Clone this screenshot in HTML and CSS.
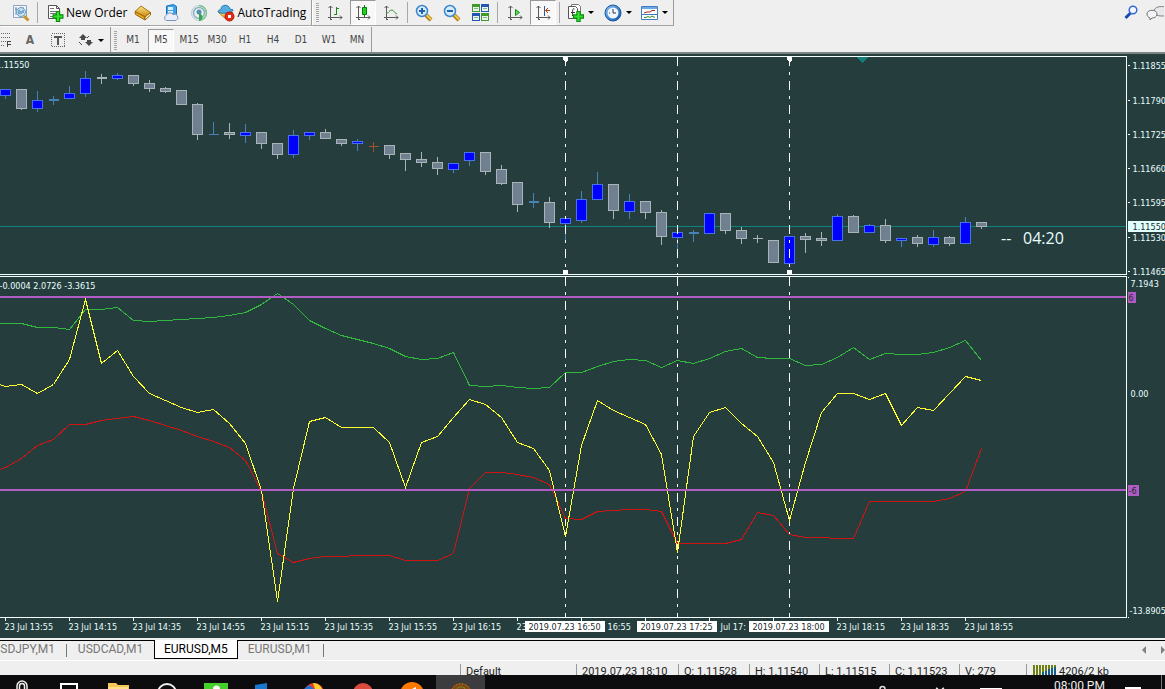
FILE: index.html
```html
<!DOCTYPE html>
<html lang="en">
<head>
<meta charset="utf-8">
<title>EURUSD,M5</title>
<link rel="stylesheet" href="styles.css">
</head>
<body>
<svg class="defs" aria-hidden="true">
  <defs>
    <linearGradient id="gold" x1="0" y1="0" x2="0" y2="1"><stop offset="0" stop-color="#ffe58a"/><stop offset="1" stop-color="#c88408"/></linearGradient>
    <linearGradient id="blue" x1="0" y1="0" x2="1" y2="1"><stop offset="0" stop-color="#8cc4f4"/><stop offset="1" stop-color="#0a50a8"/></linearGradient>
    <symbol id="plus" viewBox="0 0 10 10"><path d="M3.5.5h3v3h3v3h-3v3h-3v-3h-3v-3h3z" fill="#2fe32f" stroke="#0a8a0a"/></symbol>
    <symbol id="axes" viewBox="0 0 16 16"><path d="M3.500 1v14M1 12.500h14M1.500 3l2-2 2 2M13 10.500l2 2-2 2M3 14.500h2" fill="none" stroke="#5a5a5a"/></symbol>
    <symbol id="lens" viewBox="0 0 18 18"><path d="M11 11l5 5" stroke="#a87a10" stroke-width="4"/><path d="M11 10.500l5 5" stroke="#f0c850" stroke-width="2"/><circle cx="7" cy="7" r="5.500" fill="#d4ecff" stroke="#3a86cc" stroke-width="1.500"/></symbol>
  </defs>
</svg>

<header class="toolbars">
  <div class="bar bar-main">
    <div class="tools tools-order">
      <button class="tool" aria-label="Strategy tester"><svg width="18" height="18"><path d="M1.500 1.500h13v12h-13z" fill="#f4f8fc" stroke="#8fa4ba"/><path d="M4 3v8M3 5h2M7 4v7M11 3v6" stroke="#5b8dbd"/><circle cx="9" cy="8" r="4.500" fill="#b9dcf3" fill-opacity=".8" stroke="#6f9cc4"/><path d="M7 6v4M9 7v3M11 6v3" stroke="#4076a8"/><path d="M12 12l4.500 4.500" stroke="#c9942a" stroke-width="3"/></svg></button>
      <i class="sep"></i>
      <button class="tool tool-text tool-order"><svg width="17" height="18"><path d="M1.500 1.500h8l3 3v10h-11z" fill="#fff" stroke="#555"/><path d="M9.500 1.500v3h3" fill="none" stroke="#555"/><path d="M3 4.500h4M3 7.500h6M3 9.500h6M3 12.500h5" stroke="#777"/><use href="#plus" x="5" y="7" width="12" height="11"/></svg>New Order</button>
      <button class="tool" aria-label="MetaEditor"><svg width="18" height="16"><path d="M7 1l9.500 6.500-5.500 4.500L1 6.500z" fill="url(#gold)" stroke="#a87414"/><path d="M1 6.500L11 12v3L1.500 9.500z" fill="#e8a820" stroke="#9a6408"/><path d="M11 12l5.500-4.500v2.500L11 15z" fill="#fff1c0" stroke="#9a6408"/></svg></button>
      <button class="tool" aria-label="Market"><svg width="18" height="18"><path d="M4.500 2l7-1.500 3 2v8h-10z" fill="#3fa2ea" stroke="#1672bd"/><path d="M6 3h5v3H6zM6 7h5v2H6z" fill="#d8f0ff"/><path d="M4 16.500a3 3 0 0 1 0-5 4 4 0 0 1 7-1 3 3 0 0 1 3 6z" fill="#e6edf8" stroke="#7f93b8"/></svg></button>
      <button class="tool" aria-label="Signals"><svg width="18" height="18" fill="none"><circle cx="9" cy="9" r="7.500" stroke="#b9cdd6"/><circle cx="9" cy="9" r="5.500" stroke="#8ab0c4" stroke-width="1.500"/><path d="M9 1.500a7.500 7.500 0 0 1 0 15" stroke="#7cc48a" stroke-width="1.500"/><circle cx="9" cy="8" r="2.500" fill="#4a8fb4"/><path d="M9 17V9l3 2a4 4 0 0 1-3 6z" fill="#3aa64a"/></svg></button>
      <button class="tool tool-text"><svg width="18" height="18"><path d="M1 8h15l-6 8z" fill="url(#gold)" stroke="#b98513"/><path d="M1 7c0-1 3-1 3-2 0-5 8-5 9 0 1 1 3 0 3 1 0 3-15 5-15 1z" fill="#55aee0" stroke="#2578ac"/><circle cx="12.500" cy="12.500" r="4.500" fill="#e52b12" stroke="#b21b08"/><path d="M11 11h3v3h-3z" fill="#fff"/></svg>AutoTrading</button>
    </div>
    <div class="tools tools-chart">
      <i class="grip"></i>
      <button class="tool" aria-label="Bar chart"><svg width="16" height="16"><use href="#axes"/><path d="M9.500 2v8M9.500 3.500h2.500M7 9.500h2" stroke="#168a16"/></svg></button>
      <button class="tool pressed" aria-label="Candlesticks"><svg width="16" height="16"><use href="#axes"/><path d="M9.500 0v12" stroke="#0a7a0a"/><path d="M7.500 2.500h4v7h-4z" fill="#18d818" stroke="#0a7a0a"/></svg></button>
      <button class="tool" aria-label="Line chart"><svg width="16" height="16"><use href="#axes"/><path d="M3 9c3-1 3-4 6-4 2 0 2 3 5 4" fill="none" stroke="#3a9a3a"/></svg></button>
      <i class="sep"></i>
      <button class="tool" aria-label="Zoom in"><svg width="18" height="18"><use href="#lens"/><path d="M4 7h6M7 4v6" stroke="#2262a8" stroke-width="2"/></svg></button>
      <button class="tool" aria-label="Zoom out"><svg width="18" height="18"><use href="#lens"/><path d="M4 7h6" stroke="#2262a8" stroke-width="2"/></svg></button>
      <button class="tool" aria-label="Tile windows"><svg width="17" height="17"><path d="M0 0h8v8H0zM9 9h8v8H9z" fill="#3f9a28"/><path d="M9 0h8v8H9zM0 9h8v8H0z" fill="#2456b4"/><path d="M1 3h6v4H1zM10 3h6v4h-6zM1 12h6v4H1zM10 12h6v4h-6z" fill="#e8f4e8"/><path d="M2 4.500h4M11 4.500h4M2 13.500h4M11 13.500h4" stroke="#86b0a0"/></svg></button>
      <i class="sep sep-wide"></i>
      <button class="tool" aria-label="Auto scroll"><svg width="16" height="16"><use href="#axes"/><path d="M8.500 4.500l4 3-4 3z" fill="#5fe05f" stroke="#138a13"/></svg></button>
      <button class="tool pressed" aria-label="Chart shift"><svg width="16" height="16"><use href="#axes"/><path d="M9.500 1v10" stroke="#2b5a9a"/><path d="M15 5.500h-4M13 3l-2.500 2.500L13 8" fill="none" stroke="#c03c0c"/></svg></button>
      <i class="sep"></i>
      <button class="tool tool-drop" aria-label="Indicators"><svg width="17" height="18"><path d="M4.500.5h7l2 2v9h-9z" fill="#fff" stroke="#777"/><path d="M1.500 2.500h7l2 2v10h-9z" fill="#fff" stroke="#555"/><path d="M7.500 5c-2-1-2 1-2 7M4 8.500h4" fill="none" stroke="#333"/><use href="#plus" x="6" y="7" width="11" height="11"/></svg><b class="caret"></b></button>
      <button class="tool tool-drop" aria-label="Periods"><svg width="18" height="18"><circle cx="9" cy="9" r="8" fill="url(#blue)" stroke="#1458a4"/><circle cx="9" cy="9" r="5.500" fill="#eef6ff"/><path d="M9 5v4h3M5 9h1" fill="none" stroke="#334"/></svg><b class="caret"></b></button>
      <button class="tool tool-drop" aria-label="Templates"><svg width="17" height="16"><path d="M.5 1.500h16v13H.5z" fill="#fff" stroke="#3f7cc0"/><path d="M1 2h15v2H1z" fill="#6ca8e4"/><path d="M1 9.500h15" stroke="#3f7cc0"/><path d="M3 8l3-1 3 0 2-1.500h3" fill="none" stroke="#a82a1a"/><path d="M3 12.500h2l2-1 2 1 2-1.500 3 1.500" fill="none" stroke="#2a8a2a"/></svg><b class="caret"></b></button>
    </div>
    <div class="corner">
      <button class="tool" aria-label="Search"><svg width="15" height="15"><path d="M1.500 13l5-5" stroke="#1a48b0" stroke-width="3"/><circle cx="9" cy="5" r="3.800" fill="#f2f7ff" stroke="#3468d8" stroke-width="1.500"/></svg></button>
      <button class="tool tool-chat" aria-label="Messages"><svg width="22" height="16"><path d="M8 6c0-6 15-6 15 0 0 4-4 5-6 5-8 0-9-2-9-5z" fill="#e8e8ea" stroke="#808088"/><path d="M1 9c0-5 10-5 10 0 0 3-3 4-5 4l-2 2v-2C2 12 1 11 1 9z" fill="#f4f4f6" stroke="#707078"/></svg></button>
    </div>
  </div>
  <div class="bar bar-periods">
    <div class="tools tools-draw">
      <button class="tool tool-fib" aria-label="Fibonacci"><svg width="11" height="16" shape-rendering="crispEdges"><path d="M0 1.500h9M0 5.500h9M0 9.500h5M0 13.500h3" stroke="#666" stroke-dasharray="1 1"/><path d="M6.500 15V9.500H10M6.500 12.500h3" fill="none" stroke="#444"/></svg></button>
      <button class="tool tool-a">A</button>
      <button class="tool" aria-label="Text label"><svg width="14" height="14" shape-rendering="crispEdges"><path d="M.5.500h13v13H.5z" fill="none" stroke="#666" stroke-dasharray="1 1"/><path d="M3 3.500h8M7 3v9" fill="none" stroke="#555" stroke-width="2"/></svg></button>
      <button class="tool tool-drop" aria-label="Arrows"><svg width="16" height="14"><path d="M5 1l4 4H7v2H3V5H1zM11 13l4-4h-2V7H9v2H7z" fill="#4a4a4a"/><path d="M1 9l3 3M11 3l-2 2" stroke="#4a4a4a"/></svg><b class="caret"></b></button>
    </div>
    <div class="tools tools-periods">
      <i class="grip"></i>
      <button class="tool">M1</button><button class="tool pressed">M5</button><button class="tool">M15</button><button class="tool">M30</button><button class="tool">H1</button><button class="tool">H4</button><button class="tool">D1</button><button class="tool">W1</button><button class="tool">MN</button>
    </div>
  </div>
</header>

<main class="chart">
  <svg class="plot price" role="img" aria-label="EURUSD price">
    <g transform="translate(.5 -56.500)">
      <path class="now" d="M-1 226h4000"/>
      <g class="bear">
        <path d="M21 88V109M101 73V83M133 75V85M149 79V91M165 86V92M181 89V104M197 102V139M229 122V138M261 131V148M277 143V158M325 128V138M341 138V145M389 144V158M405 152V170M421 151V166M437 156V174M485 152V174M501 164V184M517 181V211M549 196V227M613 184V218M645 200V218M661 209V244M725 212V233M741 226V243M757 234V242M773 239V262M805 232V252M821 231V245M853 214V232M885 218V242M917 234V246M949 235V245M981 222V228M96 77h10M96 78h10M752 238h10"/>
        <path class="body" d="M16 89h10v19h-10zM128 75h10v8h-10zM144 83h10v5h-10zM160 88h10v3h-10zM176 90h10v14h-10zM192 104h10v30h-10zM224 132h10v2h-10zM256 132h10v11h-10zM272 143h10v11h-10zM320 132h10v6h-10zM336 139h10v4h-10zM384 145h10v9h-10zM400 153h10v6h-10zM416 159h10v3h-10zM432 162h10v6h-10zM480 152h10v19h-10zM496 169h10v14h-10zM512 182h10v22h-10zM544 202h10v20h-10zM608 184h10v26h-10zM640 201h10v11h-10zM656 212h10v24h-10zM720 213h10v17h-10zM736 230h10v8h-10zM768 240h10v22h-10zM800 236h10v3h-10zM816 238h10v2h-10zM848 216h10v16h-10zM880 225h10v15h-10zM912 237h10v6h-10zM944 237h10v6h-10zM976 222h10v4h-10z"/>
      </g>
      <g class="bull">
        <path d="M5 88V98M37 90V111M53 95V104M69 85V98M85 70V96M117 72V79M213 121V134M245 123V142M293 129V157M309 131V139M357 138V150M453 163V172M469 151V165M533 192V207M565 218V242M581 190V222M597 171V199M629 193V218M677 232V249M693 229V241M709 212V233M789 236V266M837 213V240M869 223V232M901 237V246M933 229V246M965 216V243M48 99h10M48 100h10M208 134h10M528 201h10M528 202h10M688 232h10M688 233h10"/>
        <path class="body" d="M0 89h10v6h-10zM32 100h10v8h-10zM64 93h10v5h-10zM80 78h10v15h-10zM112 75h10v3h-10zM240 132h10v3h-10zM288 135h10v19h-10zM304 132h10v3h-10zM352 141h10v2h-10zM448 163h10v6h-10zM464 152h10v8h-10zM560 218h10v5h-10zM576 199h10v21h-10zM592 184h10v15h-10zM624 201h10v10h-10zM672 232h10v5h-10zM704 213h10v20h-10zM784 236h10v27h-10zM832 216h10v24h-10zM864 225h10v7h-10zM896 238h10v2h-10zM928 237h10v7h-10zM960 222h10v21h-10z"/>
      </g>
      <path class="doji" d="M373 141v10M368 146h10"/>
      <path class="marks" d="M565 56.500V274M677 56.500V274M789 56.500V274"/>
    </g>
    <g transform="translate(0 -57)">
      <path class="handles" d="M563 57h5v3l-2 2h-1l-2-2zM787 57h5v3l-2 2h-1l-2-2zM563 270h5v4h-5zM787 270h5v4h-5z"/>
      <path class="shift" d="M856 57h12l-6 6z"/>
      <text x="-4" y="68">1.11550</text>
      <text class="timer" x="1001" y="244">--</text>
      <text class="timer" x="1023" y="244">04:20</text>
    </g>
  </svg>
  <svg class="axis price-axis" role="img" aria-label="Price scale">
    <g transform="translate(.5 -55.500)">
      <path class="ticks" d="M0 65h2M0 100h2M0 134h2M0 168h2M0 202h2M0 237h2M0 271h2"/>
      <text x="5" y="68">1.11855</text><text x="5" y="103">1.11790</text><text x="5" y="137">1.11725</text><text x="5" y="171">1.11660</text><text x="5" y="205">1.11595</text><text x="5" y="240">1.11530</text><text x="5" y="274">1.11465</text>
      <rect class="tag" x="0" y="220" width="60" height="11"/>
      <text class="dark" x="5" y="229">1.11550</text>
    </g>
  </svg>
  <svg class="plot oscillator" role="img" aria-label="Oscillator">
    <g transform="translate(.5 -276.500)">
      <path class="marks" d="M565 276.500V618M677 276.500V618M789 276.500V618"/>
      <polyline class="green" points="-1,323 21,323 37,327 53,327 69,329 85,309 101,309 117,307 133,320 149,321 165,320 181,319 197,318 213,317 229,315 245,312 261,304 277,293 293,304 309,320 325,328 341,335 357,339 373,343 389,348 405,356 421,359 437,358 453,352 469,385 485,386 501,385 517,387 533,388 549,387 565,372 581,372 597,366 613,361 629,359 645,360 661,367 677,360 693,363 709,358 725,351 741,348 757,357 773,358 789,358 805,365 821,364 837,357 853,347 869,359 885,353 901,354 917,354 933,352 949,347 965,340 981,360"/>
      <polyline class="red" points="-1,469 5,467 21,458 37,445 53,439 69,424 85,424 101,420 117,418 133,416 149,420 165,425 181,430 197,436 213,441 229,447 245,460 261,491 277,553 293,562 309,558 325,556 341,556 357,555 389,555 405,560 437,560 453,553 469,488 485,472 501,472 517,474 533,477 549,484 565,518 581,519 597,511 629,509 645,509 661,511 677,543 725,543 741,539 757,512 773,515 789,534 805,537 821,537 837,538 853,538 869,501 933,501 949,498 965,491 981,448"/>
      <polyline class="yellow" points="-1,384 5,386 21,384 37,393 53,384 69,359 85,299 101,363 117,350 133,376 149,393 165,400 181,407 197,412 213,409 229,423 245,443 261,490 277,601 293,488 309,421 325,417 341,427 373,427 389,442 405,487 421,442 437,436 453,417 469,399 485,404 501,417 517,442 533,448 549,470 565,536 581,445 597,400 613,410 629,417 645,424 661,454 677,552 693,436 709,412 725,407 741,423 757,436 773,462 789,520 805,462 821,412 837,393 853,393 869,399 885,393 901,425 917,407 933,410 949,393 965,376 981,380"/>
      <path class="level" d="M-1 296.500h4000M-1 489.500h4000"/>
      <text x="-1" y="288">-0.0004 2.0726 -3.3615</text>
    </g>
  </svg>
  <svg class="axis" role="img" aria-label="Oscillator scale">
    <g transform="translate(.5 -275.500)">
      <path class="ticks" d="M0 277h1M0 617h1"/>
      <text x="3" y="286">7.1943</text><text x="3" y="396">0.00</text><text x="2" y="613">-13.8905</text>
      <rect class="level-tag" x="0" y="291" width="8" height="11"/><text class="dark" x="1" y="300">6</text>
      <rect class="level-tag" x="0" y="484" width="11" height="11"/><text class="dark" x="1" y="493">-6</text>
    </g>
  </svg>
  <svg class="times" role="img" aria-label="Time scale">
    <g transform="translate(.5 -617.500)">
      <path class="ticks" d="M5 617v3M69 617v3M133 617v3M197 617v3M261 617v3M325 617v3M389 617v3M453 617v3M517 617v3M581 617v3M645 617v3M709 617v3M773 617v3M837 617v3M901 617v3M965 617v3"/>
      <text x="4" y="629">23 Jul 13:55</text><text x="68" y="629">23 Jul 14:15</text><text x="132" y="629">23 Jul 14:35</text><text x="196" y="629">23 Jul 14:55</text><text x="260" y="629">23 Jul 15:15</text><text x="324" y="629">23 Jul 15:35</text><text x="388" y="629">23 Jul 15:55</text><text x="452" y="629">23 Jul 16:15</text><text x="516" y="629">23</text><text x="607" y="629">16:55</text><text x="720" y="629">Jul 17:</text><text x="836" y="629">23 Jul 18:15</text><text x="900" y="629">23 Jul 18:35</text><text x="964" y="629">23 Jul 18:55</text>
      <path class="date-tags" d="M524.500 620.500h80v11h-80zM636.500 620.500h80v11h-80zM748.500 620.500h80v11h-80z"/>
      <text class="dark mid" x="564" y="629">2019.07.23 16:50</text><text class="dark mid" x="676" y="629">2019.07.23 17:25</text><text class="dark mid" x="788" y="629">2019.07.23 18:00</text>
    </g>
  </svg>
</main>

<nav class="tabs">
  <button class="tab tab-first">USDJPY,M1</button>
  <button class="tab tab-second">USDCAD,M1</button>
  <button class="tab active">EURUSD,M5</button>
  <button class="tab tab-last">EURUSD,M1</button>
  <span class="arrows"><button class="arrow" aria-label="Scroll left"><svg width="4" height="8"><path d="M4 0v8L0 4z" fill="#808080"/></svg></button><button class="arrow" aria-label="Scroll right"><svg width="4" height="8"><path d="M0 0v8l4-4z" fill="#808080"/></svg></button></span>
</nav>

<footer class="status">
  <span class="pane p-profile">Default</span><span class="pane p-date">2019.07.23 18:10</span><span class="pane p-open">O: 1.11528</span><span class="pane">H: 1.11540</span><span class="pane">L: 1.11515</span><span class="pane">C: 1.11523</span><span class="pane p-vol">V: 279</span>
  <span class="pane p-net"><svg width="24" height="16" shape-rendering="crispEdges"><path d="M1.500 1v12M4.500 1v12M7.500 1v12M10.500 1v12M13.500 1v12M16.500 1v12M19.500 1v12M22.500 1v12" stroke="#6e7f16" stroke-width="2"/><path d="M10.500 8v5M13.500 7v6M16.500 5v8M19.500 4v9M22.500 3v10" stroke="#175a86" stroke-width="2"/></svg>4206/2 kb</span>
</footer>

<section class="taskbar" aria-label="Taskbar">
  <button class="app" aria-label="Microphone"><svg width="24" height="14"><path d="M9.500 14v-3a2.500 2.500 0 0 1 5 0v3M7 14v-3a5 5 0 0 1 10 0v3" fill="none" stroke="#eee" stroke-width="1.500"/></svg></button>
  <button class="app" aria-label="Task view"><svg width="24" height="14"><path d="M4 18V9h16v9" fill="none" stroke="#fff" stroke-width="2"/></svg></button>
  <button class="app" aria-label="Files"><svg width="24" height="14"><path d="M2 8h8l2 2h11v5H2z" fill="#f4c756"/><path d="M2 12h20v3H2z" fill="#ffdf86"/></svg></button>
  <button class="app" aria-label="Browser"><svg width="24" height="14"><circle cx="12" cy="18" r="9" fill="none" stroke="#eee" stroke-width="2"/></svg></button>
  <button class="app" aria-label="Chat"><svg width="24" height="14"><path d="M0 8h24v6H0z" fill="#42d02a"/><path d="M9 14a3 3 0 0 1 7 0" fill="#fff"/></svg></button>
  <button class="app" aria-label="Mail"><svg width="24" height="14"><path d="M2 10l12-2v6H2z" fill="#1878d0"/></svg></button>
  <button class="app" aria-label="Internet"><svg width="24" height="14"><circle cx="12" cy="18" r="10" fill="#e83e28"/><path d="M2 14l5-4 5 4z" fill="#1a70d8"/><path d="M11 8c5 0 8 3 9 6h-7z" fill="#ffd02a"/></svg></button>
  <button class="app" aria-label="Recorder"><svg width="24" height="14"><circle cx="12" cy="18" r="10" fill="#dc4a3e"/></svg></button>
  <button class="app" aria-label="Player"><svg width="24" height="14"><circle cx="12" cy="19" r="12" fill="#ff7800"/><path d="M12 14l4-2v2z" fill="#fff"/></svg></button>
  <button class="app running" aria-label="Trading terminal"><svg width="24" height="14"><circle cx="12" cy="19" r="11" fill="#7a4a16"/><circle cx="12" cy="19" r="10" fill="none" stroke="#d08a22" stroke-dasharray="1 2"/><circle cx="12" cy="18" r="6" fill="none" stroke="#8aa428" stroke-dasharray="2 1"/></svg></button>
  <span class="tray">
    <svg width="130" height="14"><path d="M5 14a2.500 2.500 0 0 1 5 0M61 13l2 1M69 13l-2 1" fill="none" stroke="#ddd" stroke-width="1.500"/><path d="M105 13h22v1h-22z" fill="#fff"/></svg>
    <time class="clock">08:00 PM</time>
    <svg width="18" height="14"><path d="M1 12h16v2H1z" fill="#fff"/></svg>
    <i class="edge"></i>
  </span>
</section>
</body>
</html>
```
FILE: styles.css
```css
* { box-sizing: border-box; }
body {
  margin: 0;
  min-height: 100vh;
  display: flex;
  flex-direction: column;
  background: #efefef;
  font: 12px/16px "Open Sans", "Noto Sans", sans-serif;
  color: #000;
  overflow: hidden;
}
button { border: 0; padding: 0; background: none; font: inherit; color: inherit; }
svg { display: block; flex: none; }
.defs { position: absolute; width: 0; height: 0; }

/* toolbars */
.toolbars { border-bottom: 2px solid #7c8484; }
.bar { display: flex; }
.bar-main { height: 27px; }
.bar-periods { height: 25px; }
.tools { display: flex; align-items: center; border-right: 1px solid #9c9c9c; }
.bar-main .tools { border-bottom: 1px solid #a4a4a4; margin-bottom: 1px; }
.bar-periods .tools { padding-top: 1px; }
.tools-order { padding-left: 7px; box-shadow: 1px 1px #fff; }
.tools-chart { padding-left: 4px; }
.tool { width: 28px; height: 25px; display: flex; align-items: center; justify-content: center; border: 1px solid transparent; }
.tool.pressed { width: 26px; margin: 0 1px; background: #f8f8f8; border-color: #999 #fff #fff #999; }
.tool-text { width: auto; padding: 0 4px 0 3px; gap: 2px; white-space: nowrap; }
.tool-order { padding: 0 1px 0 6px; }
.tool-drop { width: 37px; gap: 4px; }
.caret { border: 3px solid transparent; border-top-color: #000; border-bottom: 0; }
.sep { width: 1px; height: 21px; margin: 0 2px; background: #a8a8a8; }
.sep-wide { margin: 0 3px; }
.grip { width: 3px; height: 19px; margin-right: 2px; background: repeating-linear-gradient(#a6a6a6 0 1px, #efefef 1px 2px); }
.corner { display: flex; margin-left: auto; }
.tool-chat { width: 20px; justify-content: flex-start; overflow: hidden; }
.tools-draw { width: 111px; }
.tool-fib { width: 16px; justify-content: flex-start; }
.tool-a { font: bold 12px/16px "DejaVu Sans Condensed", sans-serif; color: #666; }
.tools-periods { padding-left: 3px; width: 261px; margin-right: auto; font: 10px/14px "DejaVu Sans Condensed", "Noto Sans", sans-serif; color: #444; }
.tools-periods .tool { height: 23px; }

/* chart */
.chart {
  flex: 1;
  display: grid;
  grid-template-columns: minmax(0, 1fr) 38px;
  grid-template-rows: 220px 342px 20px;
  padding-top: 2px;
  background: #263d3d;
  font: 9px/12px "DejaVu Sans Condensed", "Noto Sans", sans-serif;
}
.chart svg { width: 100%; height: 100%; overflow: hidden; shape-rendering: crispEdges; }
.plot { border: solid #f4ffff; border-width: 1px 1px 1px 0; }
.chart .price, .chart .price-axis { height: 219px; }
.times { grid-column: 1 / -1; }
.chart text { fill: #e8ffff; }
.chart .dark { fill: #1c2c2c; }
.chart .mid { text-anchor: middle; }
.chart .timer { font: 16px "Open Sans", "Noto Sans", sans-serif; }
.now { stroke: #0c8480; }
.bear { stroke: #a9b4b9; fill: none; }
.bear .body { fill: #708090; }
.bull { stroke: #4682b4; fill: none; }
.bull .body { fill: #0000ff; stroke: #4674e8; }
.doji { stroke: #a0522d; }
.marks { stroke: #fff; stroke-dasharray: 9 6 3 6; }
.handles, .date-tags { fill: #fff; }
.shift { fill: #12807c; }
.ticks { stroke: #e8ffff; }
.tag { fill: #e0ffff; }
.level { stroke: #b05cc4; stroke-width: 2px; }
.level-tag { fill: #b05cc4; }
.green, .red, .yellow { fill: none; }
.green { stroke: #32b83c; }
.red { stroke: #d01414; }
.yellow { stroke: #ffff32; }

/* chart tabs */
.tabs { display: flex; height: 21px; margin-top: 2px; border-top: 1px solid #000; border-bottom: 1px solid #fff; font: 12px/16px Roboto, sans-serif; color: #777; }
.tab { height: 18px; padding: 0 10px 2px; white-space: nowrap; }
.tab-first { width: 67px; padding: 0 12px 2px 0; display: flex; justify-content: flex-end; align-items: center; overflow: hidden; }
.tab-second { width: 87px; }
.tab-first, .tab-last { background: linear-gradient(#777, #777) right 3px / 1px 13px no-repeat; }
.tab.active { height: 19px; margin-top: -1px; padding: 0 9px 1px; background: #fff; color: #000; border: solid #000; border-width: 0 1px 1px; }
.tab-last { padding-right: 12px; }
.arrows { display: flex; margin-left: auto; gap: 15px; align-items: center; padding-bottom: 2px; }

/* status bar */
.status { display: flex; justify-content: flex-end; height: 14px; padding-top: 3px; overflow: hidden; font: 11px/16px Roboto, sans-serif; color: #222; }
.pane { width: 70px; height: 16px; flex: none; padding-left: 5px; border-left: 1px solid #999; white-space: nowrap; }
.p-profile { width: 116px; }
.p-date { width: 102px; }
.p-open { width: 71px; }
.p-vol { width: 67px; }
.p-net { width: 139px; display: flex; gap: 3px; }

/* taskbar */
.taskbar { display: flex; height: 14px; overflow: hidden; background: #0c0c0e; color: #eee; }
.app { width: 49px; height: 14px; flex: none; display: flex; justify-content: center; }
.app:first-child { width: 44px; }
.app.running { background: #3c3c3e; }
.tray { display: flex; margin-left: auto; height: 14px; }
.clock { width: 48px; flex: none; margin: 0 22px 0 49px; padding-top: 3px; white-space: nowrap; font: 12px/16px Roboto, sans-serif; }
.edge { width: 1px; height: 14px; margin: 0 3px 0 19px; background: #777; }
```
